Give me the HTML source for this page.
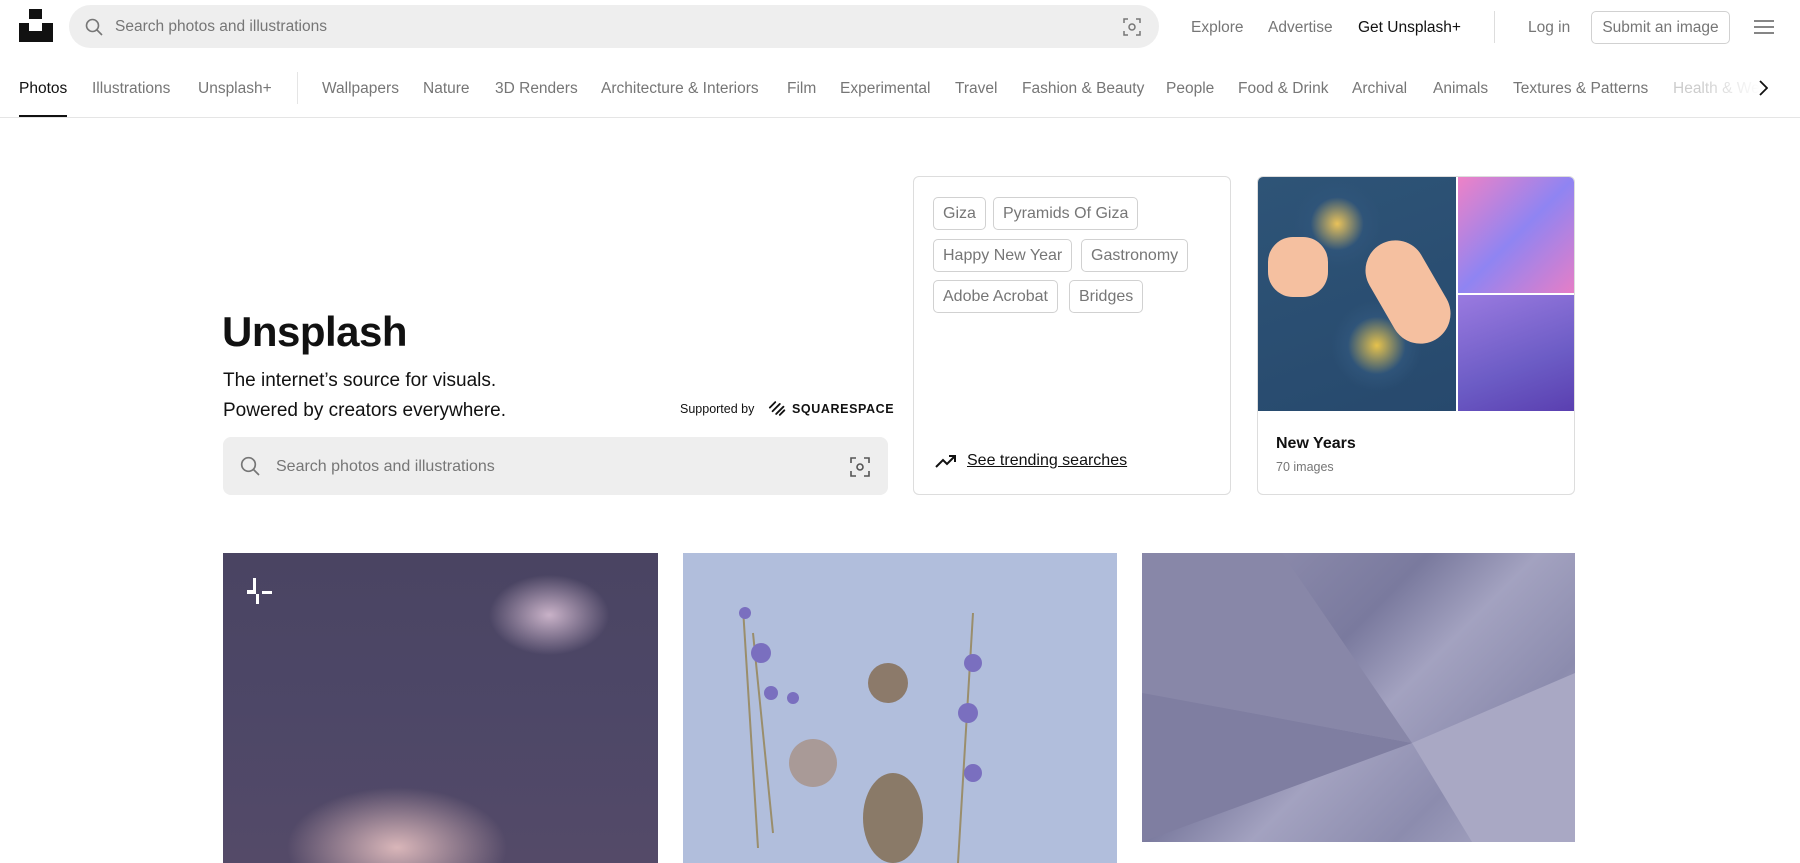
<!DOCTYPE html>
<html><head><meta charset="utf-8"><style>
*{box-sizing:border-box;margin:0;padding:0}
body{width:1800px;height:860px;overflow:hidden;background:#fff;font-family:"Liberation Sans",sans-serif;color:#111;position:relative}
.a{position:absolute;white-space:nowrap}
.nav{font-size:15.5px;color:#767676;top:80px}
.top{font-size:15.5px;color:#767676;top:19px}
.chip{position:absolute;height:33px;border:1px solid #d1d1d1;border-radius:5px;font-size:16px;color:#767676;padding:0 9px;line-height:31px}
</style></head><body>
<div class="a" style="left:29px;top:9px;width:13px;height:10px;background:#111"></div>
<div class="a" style="left:19px;top:23px;width:34px;height:19px;background:#111"></div>
<div class="a" style="left:29px;top:23px;width:13px;height:8px;background:#fff"></div>
<div class="a" style="left:69px;top:5px;width:1090px;height:43px;border-radius:22px;background:#eee"></div>
<svg class="a" style="left:85px;top:18px" width="18" height="18" viewBox="0 0 18 18"><circle cx="7.5" cy="7.5" r="6" fill="none" stroke="#767676" stroke-width="1.6"/><path d="M12 12l5 5" stroke="#767676" stroke-width="1.6"/></svg>
<div class="a" style="left:115px;top:18px;font-size:15.5px;color:#767676">Search photos and illustrations</div>
<svg class="a" style="left:1123px;top:18px" width="18" height="18" viewBox="0 0 18 18" fill="none" stroke="#767676" stroke-width="1.5"><path d="M1 5V1h4M13 1h4v4M17 13v4h-4M5 17H1v-4"/><circle cx="9" cy="9" r="3"/></svg>
<div class="a top" style="left:1191px">Explore</div>
<div class="a top" style="left:1268px">Advertise</div>
<div class="a top" style="left:1358px;color:#111">Get Unsplash+</div>
<div class="a" style="left:1494px;top:11px;width:1px;height:32px;background:#ddd"></div>
<div class="a top" style="left:1528px">Log in</div>
<div class="a" style="left:1591px;top:11px;width:139px;height:33px;border:1px solid #d1d1d1;border-radius:5px;font-size:15.5px;color:#767676;text-align:center;line-height:31px">Submit an image</div>
<svg class="a" style="left:1754px;top:19px" width="20" height="16" viewBox="0 0 20 16" stroke="#767676" stroke-width="1.8"><path d="M0 2h20M0 8h20M0 14h20"/></svg>
<div class="a nav" style="left:19px;color:#111">Photos</div>
<div class="a" style="left:19px;top:115px;width:48px;height:2px;background:#111"></div>
<div class="a nav" style="left:92px">Illustrations</div>
<div class="a nav" style="left:198px">Unsplash+</div>
<div class="a" style="left:297px;top:72px;width:1px;height:32px;background:#e5e5e5"></div>
<div class="a nav" style="left:322px">Wallpapers</div>
<div class="a nav" style="left:423px">Nature</div>
<div class="a nav" style="left:495px">3D Renders</div>
<div class="a nav" style="left:601px">Architecture &amp; Interiors</div>
<div class="a nav" style="left:787px">Film</div>
<div class="a nav" style="left:840px">Experimental</div>
<div class="a nav" style="left:955px">Travel</div>
<div class="a nav" style="left:1022px">Fashion &amp; Beauty</div>
<div class="a nav" style="left:1166px">People</div>
<div class="a nav" style="left:1238px">Food &amp; Drink</div>
<div class="a nav" style="left:1352px">Archival</div>
<div class="a nav" style="left:1433px">Animals</div>
<div class="a nav" style="left:1513px">Textures &amp; Patterns</div>
<div class="a nav" style="left:1673px;color:#ccc">Health &amp; Wellness</div>
<div class="a" style="left:1700px;top:70px;width:100px;height:40px;background:linear-gradient(90deg,rgba(255,255,255,0),#fff 60%)"></div>
<svg class="a" style="left:1758px;top:80px" width="10" height="16" viewBox="0 0 10 16" fill="none" stroke="#111" stroke-width="1.8"><path d="M2 1l7 7-7 7"/></svg>
<div class="a" style="left:0;top:117px;width:1800px;height:1px;background:#e5e5e5"></div>
<div class="a" style="left:222px;top:308px;font-size:42px;font-weight:bold;letter-spacing:-0.5px">Unsplash</div>
<div class="a" style="left:223px;top:366px;font-size:19px;line-height:30px">The internet’s source for visuals.<br>Powered by creators everywhere.</div>
<div class="a" style="left:680px;top:402px;font-size:12.5px">Supported by</div>
<svg class="a" style="left:768px;top:400px" width="20" height="17" viewBox="0 0 22 18" fill="none" stroke="#111" stroke-width="2" stroke-linecap="round"><path d="M2 8l6-6M5 12l8-8M9 15l8-8M13 16l5-5"/></svg>
<div class="a" style="left:792px;top:402px;font-size:12.5px;font-weight:bold;letter-spacing:0.6px">SQUARESPACE</div>
<div class="a" style="left:223px;top:437px;width:665px;height:58px;border-radius:8px;background:#eee"></div>
<svg class="a" style="left:240px;top:456px" width="20" height="20" viewBox="0 0 20 20"><circle cx="8.5" cy="8.5" r="6.8" fill="none" stroke="#767676" stroke-width="1.7"/><path d="M13.5 13.5l5.5 5.5" stroke="#767676" stroke-width="1.7"/></svg>
<div class="a" style="left:276px;top:458px;font-size:16px;color:#767676">Search photos and illustrations</div>
<svg class="a" style="left:850px;top:457px" width="20" height="20" viewBox="0 0 20 20" fill="none" stroke="#555" stroke-width="1.6"><path d="M1 6V1h5M14 1h5v5M19 14v5h-5M6 19H1v-5"/><circle cx="10" cy="10" r="3"/></svg>
<div class="a" style="left:913px;top:176px;width:318px;height:319px;border:1px solid #ddd;border-radius:6px"></div>
<div class="chip" style="left:933px;top:197px">Giza</div>
<div class="chip" style="left:993px;top:197px">Pyramids Of Giza</div>
<div class="chip" style="left:933px;top:239px">Happy New Year</div>
<div class="chip" style="left:1081px;top:239px">Gastronomy</div>
<div class="chip" style="left:933px;top:280px">Adobe Acrobat</div>
<div class="chip" style="left:1069px;top:280px">Bridges</div>
<svg class="a" style="left:935px;top:453px" width="22" height="16" viewBox="0 0 22 16" fill="none" stroke="#111" stroke-width="2"><path d="M1 14l7-7 4 4 8-8M14 3h6v6"/></svg>
<div class="a" style="left:967px;top:452px;font-size:16px;text-decoration:underline">See trending searches</div>
<div class="a" style="left:1257px;top:176px;width:318px;height:319px;border:1px solid #ddd;border-radius:6px;overflow:hidden">
 <div class="a" style="left:0;top:0;width:198px;height:234px;background:radial-gradient(circle at 40% 20%,#e9c25a 0,#2f5479 12%,transparent 20%),radial-gradient(circle at 60% 72%,#e6c24c 0,#2f5479 14%,transparent 22%),linear-gradient(160deg,#2e5477,#27496d)"></div>
 <div class="a" style="left:120px;top:60px;width:60px;height:110px;border-radius:30px;background:#f5c0a0;transform:rotate(-30deg)"></div>
 <div class="a" style="left:10px;top:60px;width:60px;height:60px;border-radius:25px;background:#f5c0a0"></div>
 <div class="a" style="left:200px;top:0;width:118px;height:116px;background:linear-gradient(135deg,#ee82c6,#8f84f2 50%,#e77ec6)"></div>
 <div class="a" style="left:200px;top:118px;width:118px;height:116px;background:linear-gradient(160deg,#9a7ae0,#6c5cc5 60%,#5a3fb0)"></div>
 <div class="a" style="left:18px;top:258px;font-size:16px;font-weight:bold">New Years</div>
 <div class="a" style="left:18px;top:283px;font-size:12.5px;color:#767676">70 images</div>
</div>
<div class="a" style="left:223px;top:553px;width:435px;height:310px;background:radial-gradient(ellipse 60px 40px at 75% 20%,#c9b2c8,transparent),radial-gradient(ellipse 110px 60px at 40% 95%,#d9b6b9,transparent),linear-gradient(180deg,#4a4462,#4d4767 50%,#544a68)"></div>
<svg class="a" style="left:245px;top:578px" width="30" height="28" viewBox="0 0 30 28" fill="#fff"><path d="M8 0h3v12H8zM2 12h9v4H2zM11 16h3v10h-3zM17 13h10v3H17z"/></svg>
<div class="a" style="left:683px;top:553px;width:434px;height:310px;background:#b1bedc"></div>
<svg class="a" style="left:683px;top:553px" width="434" height="310" viewBox="0 0 434 310"><g fill="none" stroke="#9a8e6c" stroke-width="2"><path d="M60 55l15 240M70 80l20 200M290 60l-15 250"/></g><g fill="#7a6fbf"><circle cx="62" cy="60" r="6"/><circle cx="78" cy="100" r="10"/><circle cx="88" cy="140" r="7"/><circle cx="110" cy="145" r="6"/><circle cx="290" cy="110" r="9"/><circle cx="285" cy="160" r="10"/><circle cx="290" cy="220" r="9"/></g><circle cx="205" cy="130" r="20" fill="#8c7a6a"/><circle cx="130" cy="210" r="24" fill="#a79186" opacity=".8"/><ellipse cx="210" cy="265" rx="30" ry="45" fill="#8a7a68"/></svg>
<div class="a" style="left:1142px;top:553px;width:433px;height:289px;background:linear-gradient(135deg,#9896b5,#7a7a9e 40%,#a3a2c0 55%,#8c8cae 75%,#b3b2cc)"></div>
<svg class="a" style="left:1142px;top:553px" width="433" height="289" viewBox="0 0 433 289"><polygon points="0,0 140,0 270,190 0,140" fill="#8887a8"/><polygon points="270,190 433,120 433,289 330,289" fill="#a9a8c4"/><polygon points="0,140 270,190 0,289" fill="#7f7ea1"/></svg>
</body></html>
